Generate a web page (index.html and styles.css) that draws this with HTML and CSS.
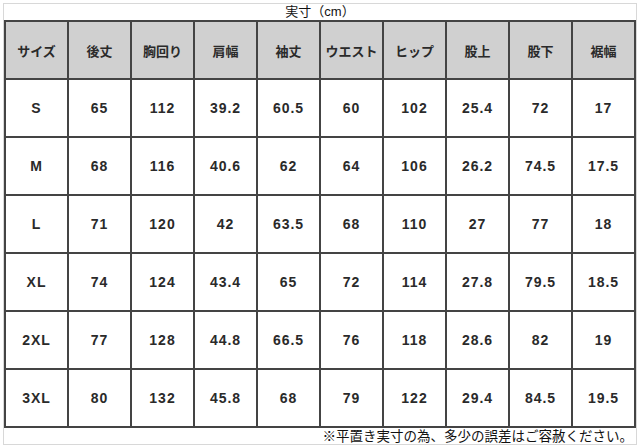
FILE: index.html
```html
<!DOCTYPE html>
<html lang="ja">
<head>
<meta charset="utf-8">
<link rel="stylesheet" href="styles.css">
</head>
<body>
<div class="sheet">
  <div class="title">実寸（cm）</div>
  <table class="sizes">
    <thead>
      <tr><th>サイズ</th><th>後丈</th><th>胸回り</th><th>肩幅</th><th>袖丈</th><th>ウエスト</th><th>ヒップ</th><th>股上</th><th>股下</th><th>裾幅</th></tr>
    </thead>
    <tbody>
      <tr><td>S</td><td>65</td><td>112</td><td>39.2</td><td>60.5</td><td>60</td><td>102</td><td>25.4</td><td>72</td><td>17</td></tr>
      <tr><td>M</td><td>68</td><td>116</td><td>40.6</td><td>62</td><td>64</td><td>106</td><td>26.2</td><td>74.5</td><td>17.5</td></tr>
      <tr><td>L</td><td>71</td><td>120</td><td>42</td><td>63.5</td><td>68</td><td>110</td><td>27</td><td>77</td><td>18</td></tr>
      <tr><td>XL</td><td>74</td><td>124</td><td>43.4</td><td>65</td><td>72</td><td>114</td><td>27.8</td><td>79.5</td><td>18.5</td></tr>
      <tr><td>2XL</td><td>77</td><td>128</td><td>44.8</td><td>66.5</td><td>76</td><td>118</td><td>28.6</td><td>82</td><td>19</td></tr>
      <tr><td>3XL</td><td>80</td><td>132</td><td>45.8</td><td>68</td><td>79</td><td>122</td><td>29.4</td><td>84.5</td><td>19.5</td></tr>
    </tbody>
  </table>
  <div class="note">※平置き実寸の為、多少の誤差はご容赦ください。</div>
</div>
</body>
</html>
```
FILE: styles.css
```css
html, body {
  margin: 0;
  padding: 0;
  background: #fff;
}
body {
  font-family: "Liberation Sans", "Noto Sans CJK JP", sans-serif;
  color: #222;
}
.sheet {
  margin: 3px 0 0 3px;
  width: 634px;
  height: 442px;
  box-sizing: border-box;
  border: 1px solid #d8d8d8;
  display: flex;
  flex-direction: column;
}
.title {
  height: 16px;
  font-size: 13px;
  line-height: 16px;
  text-align: center;
  color: #111;
}
.sizes {
  width: 632px;
  border-collapse: collapse;
  table-layout: fixed;
}
.sizes th, .sizes td {
  border: 2px solid #444;
  height: 56px;
  padding: 0;
  text-align: center;
  font-weight: bold;
  font-size: 14px;
  letter-spacing: 1px;
  color: #2a2a2a;
}
.sizes th {
  background: #d0d0d0;
  font-size: 13px;
  letter-spacing: 0;
}
.note {
  flex: 1;
  font-size: 13.5px;
  line-height: 17px;
  text-align: right;
  padding-right: 3px;
  color: #111;
  white-space: nowrap;
}
```
